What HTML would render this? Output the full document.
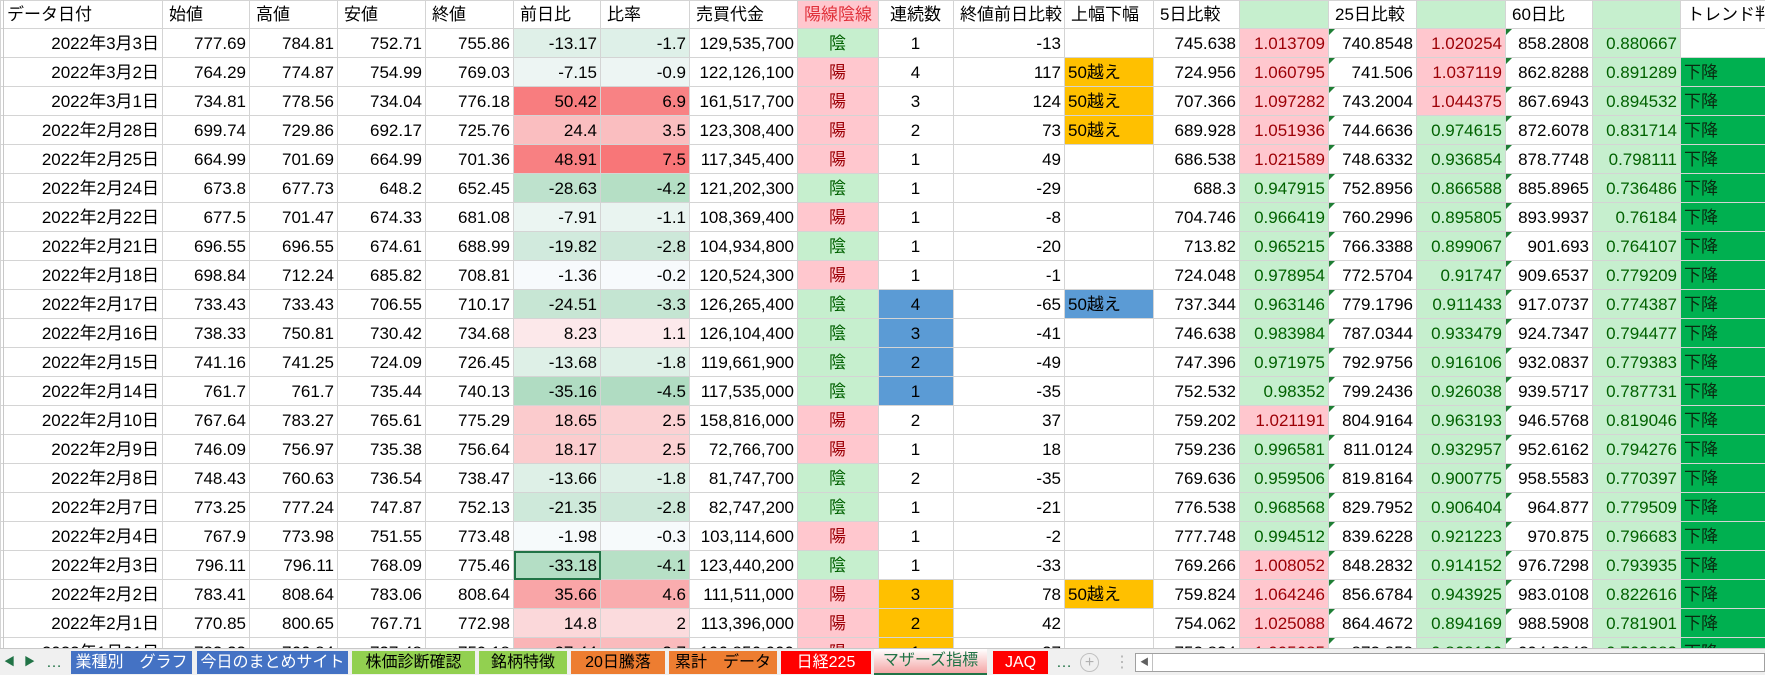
<!DOCTYPE html>
<html><head><meta charset="utf-8"><style>
*{margin:0;padding:0;box-sizing:border-box}
body{width:1765px;height:675px;overflow:hidden;background:#fff;font-family:"Liberation Sans","Noto Sans CJK JP",sans-serif;font-size:17px;color:#000;position:relative}
table{border-collapse:collapse;table-layout:fixed;position:absolute;left:0;top:0;width:1765px}
td{border:1px solid #d4d4d4;height:29px;white-space:nowrap;overflow:hidden;text-align:right;padding:0 3px 0 2px;line-height:27px}
tr.h td{height:28px;text-align:left;padding-left:6px}
td.c{text-align:center}
td.l{text-align:left;padding-left:3px}
.y{background:#ffc7ce;color:#9c0006;text-align:center}
.n{background:#c6efce;color:#006100;text-align:center}
.p{background:#ffc7ce;color:#9c0006}
.g{background:#c6efce;color:#006100}
.o{background:#ffc000}
.b{background:#5b9bd5}
.t{background:#00b050;text-align:left!important;padding-left:3px!important;color:#0a2a10}
.m{position:relative}
.m::before{content:"";position:absolute;left:0;top:0;border-top:6px solid #1e7e34;border-right:6px solid transparent}
.sel{outline:2px solid #217346;outline-offset:-2px}
#tabs{position:absolute;left:0;top:648px;width:1765px;height:27px;background:#f0f0f0;border-top:1px solid #c8c8c8;font-size:16px}
.tab{position:absolute;top:2px;height:23px;line-height:23px;text-align:center;white-space:nowrap}
</style></head><body>
<table>
<colgroup><col style="width:162px"><col style="width:87px"><col style="width:88px"><col style="width:88px"><col style="width:88px"><col style="width:87px"><col style="width:89px"><col style="width:108px"><col style="width:81px"><col style="width:75px"><col style="width:111px"><col style="width:89px"><col style="width:86px"><col style="width:89px"><col style="width:88px"><col style="width:89px"><col style="width:87px"><col style="width:88px"><col style="width:85px"></colgroup>
<tr class="h"><td>データ日付</td><td>始値</td><td>高値</td><td>安値</td><td>終値</td><td>前日比</td><td>比率</td><td>売買代金</td><td style="background:#ffc7ce;color:#e0303a">陽線陰線</td><td style="padding-left:11px">連続数</td><td>終値前日比較</td><td>上幅下幅</td><td>5日比較</td><td class="g"></td><td>25日比較</td><td class="g"></td><td>60日比</td><td class="g"></td><td>トレンド判</td></tr>
<tr><td>2022年3月3日</td><td>777.69</td><td>784.81</td><td>752.71</td><td>755.86</td><td style="background:rgb(223,240,232)">-13.17</td><td style="background:rgb(222,240,232)">-1.7</td><td>129,535,700</td><td class="n">陰</td><td class="c">1</td><td>-13</td><td></td><td>745.638</td><td class="p">1.013709</td><td class="m">740.8548</td><td class="p">1.020254</td><td class="m">858.2808</td><td class="g">0.880667</td><td></td></tr>
<tr><td>2022年3月2日</td><td>764.29</td><td>774.87</td><td>754.99</td><td>769.03</td><td style="background:rgb(237,245,243)">-7.15</td><td style="background:rgb(237,245,243)">-0.9</td><td>122,126,100</td><td class="y">陽</td><td class="c">4</td><td>117</td><td class="o l">50越え</td><td>724.956</td><td class="p">1.060795</td><td class="m">741.506</td><td class="p">1.037119</td><td class="m">862.8288</td><td class="g">0.891289</td><td class="t">下降</td></tr>
<tr><td>2022年3月1日</td><td>734.81</td><td>778.56</td><td>734.04</td><td>776.18</td><td style="background:rgb(248,125,127)">50.42</td><td style="background:rgb(248,130,132)">6.9</td><td>161,517,700</td><td class="y">陽</td><td class="c">3</td><td>124</td><td class="o l">50越え</td><td>707.366</td><td class="p">1.097282</td><td class="m">743.2004</td><td class="p">1.044375</td><td class="m">867.6943</td><td class="g">0.894532</td><td class="t">下降</td></tr>
<tr><td>2022年2月28日</td><td>699.74</td><td>729.86</td><td>692.17</td><td>725.76</td><td style="background:rgb(250,190,192)">24.4</td><td style="background:rgb(250,190,192)">3.5</td><td>123,308,400</td><td class="y">陽</td><td class="c">2</td><td>73</td><td class="o l">50越え</td><td>689.928</td><td class="p">1.051936</td><td class="m">744.6636</td><td class="g">0.974615</td><td class="m">872.6078</td><td class="g">0.831714</td><td class="t">下降</td></tr>
<tr><td>2022年2月25日</td><td>664.99</td><td>701.69</td><td>664.99</td><td>701.36</td><td style="background:rgb(248,128,130)">48.91</td><td style="background:rgb(248,118,120)">7.5</td><td>117,345,400</td><td class="y">陽</td><td class="c">1</td><td>49</td><td></td><td>686.538</td><td class="p">1.021589</td><td class="m">748.6332</td><td class="g">0.936854</td><td class="m">878.7748</td><td class="g">0.798111</td><td class="t">下降</td></tr>
<tr><td>2022年2月24日</td><td>673.8</td><td>677.73</td><td>648.2</td><td>652.45</td><td style="background:rgb(190,226,205)">-28.63</td><td style="background:rgb(181,223,197)">-4.2</td><td>121,202,300</td><td class="n">陰</td><td class="c">1</td><td>-29</td><td></td><td>688.3</td><td class="g">0.947915</td><td class="m">752.8956</td><td class="g">0.866588</td><td class="m">885.8965</td><td class="g">0.736486</td><td class="t">下降</td></tr>
<tr><td>2022年2月22日</td><td>677.5</td><td>701.47</td><td>674.33</td><td>681.08</td><td style="background:rgb(235,245,242)">-7.91</td><td style="background:rgb(233,244,240)">-1.1</td><td>108,369,400</td><td class="y">陽</td><td class="c">1</td><td>-8</td><td></td><td>704.746</td><td class="g">0.966419</td><td class="m">760.2996</td><td class="g">0.895805</td><td class="m">893.9937</td><td class="g">0.76184</td><td class="t">下降</td></tr>
<tr><td>2022年2月21日</td><td>696.55</td><td>696.55</td><td>674.61</td><td>688.99</td><td style="background:rgb(209,234,221)">-19.82</td><td style="background:rgb(205,232,217)">-2.8</td><td>104,934,800</td><td class="n">陰</td><td class="c">1</td><td>-20</td><td></td><td>713.82</td><td class="g">0.965215</td><td class="m">766.3388</td><td class="g">0.899067</td><td class="m">901.693</td><td class="g">0.764107</td><td class="t">下降</td></tr>
<tr><td>2022年2月18日</td><td>698.84</td><td>712.24</td><td>685.82</td><td>708.81</td><td style="background:rgb(247,250,252)">-1.36</td><td style="background:rgb(247,250,252)">-0.2</td><td>120,524,300</td><td class="y">陽</td><td class="c">1</td><td>-1</td><td></td><td>724.048</td><td class="g">0.978954</td><td class="m">772.5704</td><td class="g">0.91747</td><td class="m">909.6537</td><td class="g">0.779209</td><td class="t">下降</td></tr>
<tr><td>2022年2月17日</td><td>733.43</td><td>733.43</td><td>706.55</td><td>710.17</td><td style="background:rgb(199,230,212)">-24.51</td><td style="background:rgb(196,229,210)">-3.3</td><td>126,265,400</td><td class="n">陰</td><td class="c b">4</td><td>-65</td><td class="b l">50越え</td><td>737.344</td><td class="g">0.963146</td><td class="m">779.1796</td><td class="g">0.911433</td><td class="m">917.0737</td><td class="g">0.774387</td><td class="t">下降</td></tr>
<tr><td>2022年2月16日</td><td>738.33</td><td>750.81</td><td>730.42</td><td>734.68</td><td style="background:rgb(252,232,234)">8.23</td><td style="background:rgb(252,233,235)">1.1</td><td>126,104,400</td><td class="n">陰</td><td class="c b">3</td><td>-41</td><td></td><td>746.638</td><td class="g">0.983984</td><td class="m">787.0344</td><td class="g">0.933479</td><td class="m">924.7347</td><td class="g">0.794477</td><td class="t">下降</td></tr>
<tr><td>2022年2月15日</td><td>741.16</td><td>741.25</td><td>724.09</td><td>726.45</td><td style="background:rgb(222,240,231)">-13.68</td><td style="background:rgb(222,240,231)">-1.8</td><td>119,661,900</td><td class="n">陰</td><td class="c b">2</td><td>-49</td><td></td><td>747.396</td><td class="g">0.971975</td><td class="m">792.9756</td><td class="g">0.916106</td><td class="m">932.0837</td><td class="g">0.779383</td><td class="t">下降</td></tr>
<tr><td>2022年2月14日</td><td>761.7</td><td>761.7</td><td>735.44</td><td>740.13</td><td style="background:rgb(176,220,194)">-35.16</td><td style="background:rgb(176,220,194)">-4.5</td><td>117,535,000</td><td class="n">陰</td><td class="c b">1</td><td>-35</td><td></td><td>752.532</td><td class="g">0.98352</td><td class="m">799.2436</td><td class="g">0.926038</td><td class="m">939.5717</td><td class="g">0.787731</td><td class="t">下降</td></tr>
<tr><td>2022年2月10日</td><td>767.64</td><td>783.27</td><td>765.61</td><td>775.29</td><td style="background:rgb(251,203,205)">18.65</td><td style="background:rgb(251,209,211)">2.5</td><td>158,816,000</td><td class="y">陽</td><td class="c">2</td><td>37</td><td></td><td>759.202</td><td class="p">1.021191</td><td class="m">804.9164</td><td class="g">0.963193</td><td class="m">946.5768</td><td class="g">0.819046</td><td class="t">下降</td></tr>
<tr><td>2022年2月9日</td><td>746.09</td><td>756.97</td><td>735.38</td><td>756.64</td><td style="background:rgb(251,204,206)">18.17</td><td style="background:rgb(251,209,211)">2.5</td><td>72,766,700</td><td class="y">陽</td><td class="c">1</td><td>18</td><td></td><td>759.236</td><td class="g">0.996581</td><td class="m">811.0124</td><td class="g">0.932957</td><td class="m">952.6162</td><td class="g">0.794276</td><td class="t">下降</td></tr>
<tr><td>2022年2月8日</td><td>748.43</td><td>760.63</td><td>736.54</td><td>738.47</td><td style="background:rgb(222,240,231)">-13.66</td><td style="background:rgb(222,240,231)">-1.8</td><td>81,747,700</td><td class="n">陰</td><td class="c">2</td><td>-35</td><td></td><td>769.636</td><td class="g">0.959506</td><td class="m">819.8164</td><td class="g">0.900775</td><td class="m">958.5583</td><td class="g">0.770397</td><td class="t">下降</td></tr>
<tr><td>2022年2月7日</td><td>773.25</td><td>777.24</td><td>747.87</td><td>752.13</td><td style="background:rgb(206,233,218)">-21.35</td><td style="background:rgb(205,232,217)">-2.8</td><td>82,747,200</td><td class="n">陰</td><td class="c">1</td><td>-21</td><td></td><td>776.538</td><td class="g">0.968568</td><td class="m">829.7952</td><td class="g">0.906404</td><td class="m">964.877</td><td class="g">0.779509</td><td class="t">下降</td></tr>
<tr><td>2022年2月4日</td><td>767.9</td><td>773.98</td><td>751.55</td><td>773.48</td><td style="background:rgb(246,250,251)">-1.98</td><td style="background:rgb(246,250,251)">-0.3</td><td>103,114,600</td><td class="y">陽</td><td class="c">1</td><td>-2</td><td></td><td>777.748</td><td class="g">0.994512</td><td class="m">839.6228</td><td class="g">0.921223</td><td class="m">970.875</td><td class="g">0.796683</td><td class="t">下降</td></tr>
<tr><td>2022年2月3日</td><td>796.11</td><td>796.11</td><td>768.09</td><td>775.46</td><td class="sel" style="background:rgb(180,222,197)">-33.18</td><td style="background:rgb(183,224,198)">-4.1</td><td>123,440,200</td><td class="n">陰</td><td class="c">1</td><td>-33</td><td></td><td>769.266</td><td class="p">1.008052</td><td class="m">848.2832</td><td class="g">0.914152</td><td class="m">976.7298</td><td class="g">0.793935</td><td class="t">下降</td></tr>
<tr><td>2022年2月2日</td><td>783.41</td><td>808.64</td><td>783.06</td><td>808.64</td><td style="background:rgb(249,165,167)">35.66</td><td style="background:rgb(249,172,174)">4.6</td><td>111,511,000</td><td class="y">陽</td><td class="c o">3</td><td>78</td><td class="o l">50越え</td><td>759.824</td><td class="p">1.064246</td><td class="m">856.6784</td><td class="g">0.943925</td><td class="m">983.0108</td><td class="g">0.822616</td><td class="t">下降</td></tr>
<tr><td>2022年2月1日</td><td>770.85</td><td>800.65</td><td>767.71</td><td>772.98</td><td style="background:rgb(251,216,218)">14.8</td><td style="background:rgb(251,219,221)">2</td><td>113,396,000</td><td class="y">陽</td><td class="c o">2</td><td>42</td><td></td><td>754.062</td><td class="p">1.025088</td><td class="m">864.4672</td><td class="g">0.894169</td><td class="m">988.5908</td><td class="g">0.781901</td><td class="t">下降</td></tr>
<tr><td>2022年1月31日</td><td>783.33</td><td>766.84</td><td>737.48</td><td>759.18</td><td style="background:rgb(250,181,183)">27.44</td><td style="background:rgb(250,187,189)">3.7</td><td>106,856,000</td><td class="y">陽</td><td class="c o">1</td><td>37</td><td></td><td>752.834</td><td class="p">1.005685</td><td class="m">872.858</td><td class="g">0.868126</td><td class="m">994.6848</td><td class="g">0.763283</td><td class="t">下降</td></tr>
</table>
<div style="position:absolute;left:3px;top:0;width:1px;height:648px;background:#c8c8c8"></div>
<div id="tabs">
<div class="tab" style="left:4px;color:#217346;font-size:11px">◀</div>
<div class="tab" style="left:24px;color:#217346;font-size:11px">▶</div>
<div class="tab" style="left:46px;color:#217346">…</div>
<div class="tab" style="left:71px;width:121px;background:#4472c4;color:#fff">業種別　グラフ</div>
<div class="tab" style="left:197px;width:151px;background:#4472c4;color:#fff">今日のまとめサイト</div>
<div class="tab" style="left:352px;width:123px;background:#92d050">株価診断確認</div>
<div class="tab" style="left:479px;width:88px;background:#92d050">銘柄特徴</div>
<div class="tab" style="left:571px;width:94px;background:#ed7d31">20日騰落</div>
<div class="tab" style="left:669px;width:108px;background:#ed7d31">累計　データ</div>
<div class="tab" style="left:781px;width:90px;background:#ff0000;color:#fff">日経225</div>
<div class="tab" style="left:874px;top:0;height:26px;width:113px;background:linear-gradient(#fff,#f4a6a6);color:#217346;border-bottom:2px solid #217346">マザーズ指標</div>
<div class="tab" style="left:993px;width:55px;background:#ff0000;color:#fff">JAQ</div>
<div class="tab" style="left:1056px;color:#217346">…</div>
<div class="tab" style="left:1080px;top:4px;width:19px;height:19px;line-height:17px;border:1px solid #c0c0c0;border-radius:50%;color:#b0b0b0">+</div>
<div class="tab" style="left:1114px;color:#b0b0b0">⋮</div>
<div style="position:absolute;left:1135px;top:4px;width:630px;height:19px;background:#fff;border:1px solid #a0a0a0"></div>
<div style="position:absolute;left:1137px;top:5px;width:16px;height:17px;border-right:1px solid #c0c0c0;font-size:9px;color:#606060;line-height:17px;text-align:center">◀</div>
</div>
</body></html>
